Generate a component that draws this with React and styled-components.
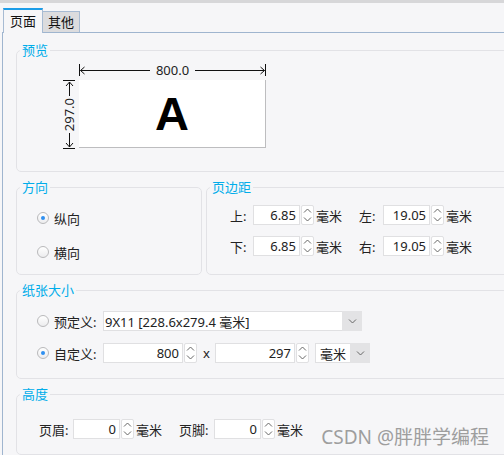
import React from 'react'
import styled, { createGlobalStyle } from 'styled-components'

const GlobalStyle = createGlobalStyle`
  html, body {
    margin: 0;
    padding: 0;
    background: #f6f6f8;
    overflow: hidden;
  }
  body {
    font-family: "Noto Sans", "Noto Sans CJK SC", sans-serif;
    font-size: 13px;
    color: #222;
  }
`

const ChevronUp = () => (
  <svg width='9' height='5' viewBox='0 0 9 5'>
    <path d='M1 4.5 L4.5 1 L8 4.5' fill='none' stroke='#666' strokeWidth='1' />
  </svg>
)
const ChevronDown = ({ size = 9 }) => (
  <svg width={size} height='5' viewBox='0 0 9 5'>
    <path d='M1 0.5 L4.5 4 L8 0.5' fill='none' stroke='#666' strokeWidth='1' />
  </svg>
)

export default function App() {
  return (
    <Window>
      <GlobalStyle />
      <TabBar>
        <Tab active>页面</Tab>
        <Tab>其他</Tab>
      </TabBar>
      <Panel>
        <Group>
          <Legend>预览</Legend>
          <Body pad='6px 0 23px 45px'>
            <Preview>
              <TopDim>
                <Tick />
                <svg width='5' height='9' viewBox='0 0 5 9'>
                  <path d='M4.5 1 L0.5 4.5 L4.5 8 M0.5 4.5 H5' fill='none' stroke='#111' />
                </svg>
                <HLine />
                <DimLabel>800.0</DimLabel>
                <HLine />
                <svg width='5' height='9' viewBox='0 0 5 9'>
                  <path d='M0.5 1 L4.5 4.5 L0.5 8 M0 4.5 H4.5' fill='none' stroke='#111' />
                </svg>
                <Tick />
              </TopDim>
              <SideDim>
                <HTick />
                <svg width='9' height='6' viewBox='0 0 9 6'>
                  <path d='M1 5 L4.5 1 L8 5 M4.5 1 V6' fill='none' stroke='#111' />
                </svg>
                <VLine />
                <SideLabel>297.0</SideLabel>
                <VLine />
                <svg width='9' height='6' viewBox='0 0 9 6'>
                  <path d='M1 1 L4.5 5 L8 1 M4.5 0 V5' fill='none' stroke='#111' />
                </svg>
                <HTick />
              </SideDim>
              <Paper>A</Paper>
            </Preview>
          </Body>
        </Group>

        <Pair>
          <Group width='186px'>
            <Legend>方向</Legend>
            <Body pad='13px 0 12px 20px'>
              <Stack gap='14px'>
                <Choice>
                  <Radio checked />
                  纵向
                </Choice>
                <Choice>
                  <Radio />
                  横向
                </Choice>
              </Stack>
            </Body>
          </Group>
          <Group grow>
            <Legend>页边距</Legend>
            <Body pad='10px 0 12px 23px'>
              <Stack gap='11px'>
                <Row>
                  <Field label='上:' labelWidth={23} value='6.85' />
                  <Field label='左:' labelWidth={24} value='19.05' />
                </Row>
                <Row>
                  <Field label='下:' labelWidth={23} value='6.85' />
                  <Field label='右:' labelWidth={24} value='19.05' />
                </Row>
              </Stack>
            </Body>
          </Group>
        </Pair>

        <Group>
          <Legend>纸张大小</Legend>
          <Body pad='13px 0 15px 20px'>
            <Stack gap='12px'>
              <Row>
                <Radio />
                <ChoiceLabel>预定义:</ChoiceLabel>
                <Select width={259}>
                  <SelectText>9X11 [228.6x279.4 毫米]</SelectText>
                  <SelectButton>
                    <ChevronDown />
                  </SelectButton>
                </Select>
              </Row>
              <Row>
                <Radio checked />
                <ChoiceLabel>自定义:</ChoiceLabel>
                <NumberInput width={80} defaultValue='800' readOnly />
                <Spinner />
                <Times>x</Times>
                <NumberInput width={80} defaultValue='297' readOnly />
                <Spinner />
                <Select width={55} gap>
                  <SelectText pad>毫米</SelectText>
                  <SelectButton>
                    <ChevronDown />
                  </SelectButton>
                </Select>
              </Row>
            </Stack>
          </Body>
        </Group>

        <Group>
          <Legend>高度</Legend>
          <Body pad='17px 0 15px 22px'>
            <Row>
              <Field label='页眉:' labelWidth={34} value='0' />
              <Field label='页脚:' labelWidth={35} value='0' />
            </Row>
          </Body>
        </Group>
      </Panel>
      <Watermark>CSDN @胖胖学编程</Watermark>
    </Window>
  )
}

const Field = ({ label, labelWidth, value }) => (
  <FieldWrap>
    <FieldLabel width={labelWidth}>{label}</FieldLabel>
    <NumberInput width={47} defaultValue={value} readOnly />
    <Spinner />
    <Unit>毫米</Unit>
  </FieldWrap>
)

const Spinner = () => (
  <SpinBox>
    <SpinHalf>
      <ChevronUp />
    </SpinHalf>
    <SpinHalf>
      <ChevronDown />
    </SpinHalf>
  </SpinBox>
)

const Window = styled.div`
  position: relative;
  display: flex;
  flex-direction: column;
  width: 504px;
  height: 455px;
  box-sizing: border-box;
  overflow: hidden;
  background: #f6f6f8;
  border-top: 3px solid #d7d7d9;
`

const TabBar = styled.div`
  position: relative;
  z-index: 1;
  display: flex;
  align-items: flex-start;
  height: 24px;
  margin-top: 5px;
  padding-left: 3px;
`

const Tab = styled.div`
  box-sizing: border-box;
  display: flex;
  align-items: center;
  justify-content: center;
  width: ${({ active }) => (active ? `40px` : `37px`)};
  height: ${({ active }) => (active ? `25px` : `21px`)};
  margin-top: ${({ active }) => (active ? `0` : `3px`)};
  padding-top: ${({ active }) => (active ? `0` : `1px`)};
  border: 1px solid #a7bbd3;
  border-bottom: none;
  border-top: ${({ active }) =>
    active ? `2px solid #1c9de8` : `1px solid #a7bbd3`};
  border-left: ${({ active }) => (active ? `1px solid #a7bbd3` : `none`)};
  background: ${({ active }) => (active ? `#f6f6f8` : `#dcdcde`)};
  font-size: 13px;
  line-height: 1;
  color: #111;
`

const Panel = styled.div`
  flex: 1;
  display: flex;
  flex-direction: column;
  gap: 7px;
  box-sizing: border-box;
  width: 560px;
  margin-left: 2px;
  padding: 9px 0 0 13px;
  border-top: 1px solid #9fb5cf;
  border-left: 1px solid #9fb5cf;
`

const Group = styled.fieldset`
  box-sizing: border-box;
  margin: 0;
  min-width: 0;
  padding: 0;
  width: ${({ width }) => width || `auto`};
  flex: ${({ grow }) => (grow ? `1` : `none`)};
  border: 1px solid #e2e2e6;
  border-radius: 5px;
`

const Legend = styled.legend`
  margin-left: 3px;
  padding: 0 2px;
  font-size: 13px;
  line-height: 16px;
  color: #00adea;
`

const Body = styled.div`
  padding: ${({ pad }) => pad};
`

const Pair = styled.div`
  display: flex;
  gap: 4px;
`

const Preview = styled.div`
  display: grid;
  grid-template-columns: 14px 187px;
  grid-template-rows: 12px 68px;
  column-gap: 3px;
  row-gap: 4px;
`

const TopDim = styled.div`
  grid-column: 2;
  grid-row: 1;
  display: flex;
  align-items: center;
  height: 12px;
`

const Tick = styled.span`
  width: 1px;
  height: 12px;
  background: #111;
`

const HLine = styled.span`
  flex: 1;
  height: 1px;
  background: #111;
`

const DimLabel = styled.span`
  padding: 0 6px;
  font-size: 13px;
  line-height: 12px;
  color: #222;
`

const SideDim = styled.div`
  grid-column: 1;
  grid-row: 2;
  display: flex;
  flex-direction: column;
  align-items: center;
  height: 69px;
`

const HTick = styled.span`
  width: 12px;
  height: 1px;
  background: #111;
`

const VLine = styled.span`
  flex: 1;
  width: 1px;
  background: #111;
`

const SideLabel = styled.span`
  writing-mode: vertical-rl;
  transform: rotate(180deg);
  padding: 2px 0;
  font-size: 13px;
  line-height: 14px;
  color: #222;
`

const Paper = styled.div`
  grid-column: 2;
  grid-row: 2;
  display: flex;
  align-items: center;
  justify-content: center;
  background: #fff;
  border-right: 1px solid #bdbdbf;
  border-bottom: 1px solid #bdbdbf;
  font-family: "Liberation Sans", Arial, sans-serif;
  font-weight: bold;
  font-size: 47px;
  line-height: 1;
  color: #000;
`

const Stack = styled.div`
  display: flex;
  flex-direction: column;
  gap: ${({ gap }) => gap};
`

const Row = styled.div`
  display: flex;
  align-items: center;
  height: 20px;
`

const Choice = styled.label`
  display: flex;
  align-items: center;
  height: 20px;
  font-size: 13px;
  color: #222;
`

const Radio = styled.span`
  box-sizing: border-box;
  display: inline-flex;
  align-items: center;
  justify-content: center;
  flex: none;
  width: 12px;
  height: 12px;
  margin-right: 5px;
  border: 1px solid #b9b9bb;
  border-radius: 50%;
  background: linear-gradient(#fff, #ececee);
  &::after {
    content: '';
    display: ${({ checked }) => (checked ? `block` : `none`)};
    width: 4px;
    height: 4px;
    border-radius: 50%;
    background: #2f8ff0;
  }
`

const ChoiceLabel = styled.span`
  width: 49px;
  font-size: 13px;
`

const FieldWrap = styled.div`
  display: flex;
  align-items: center;
  & + & {
    margin-left: 17px;
  }
`

const FieldLabel = styled.span`
  width: ${({ width }) => width}px;
  font-size: 13px;
  color: #222;
`

const NumberInput = styled.input`
  box-sizing: border-box;
  width: ${({ width }) => width}px;
  height: 20px;
  margin: 0;
  padding: 0 3px;
  border: 1px solid #e0e0e2;
  background: #fff;
  text-align: right;
  font-family: inherit;
  font-size: 13px;
  color: #222;
  outline: none;
`

const SpinBox = styled.div`
  box-sizing: border-box;
  display: flex;
  flex-direction: column;
  width: 13px;
  height: 20px;
  margin-left: 1px;
  border: 1px solid #e0e0e2;
  border-radius: 2px;
  background: #fff;
`

const SpinHalf = styled.div`
  flex: 1;
  display: flex;
  align-items: center;
  justify-content: center;
`

const Unit = styled.span`
  margin-left: 2px;
  font-size: 13px;
  color: #222;
`

const Times = styled.span`
  width: 18px;
  padding-left: 6px;
  box-sizing: border-box;
  font-size: 13px;
`

const Select = styled.div`
  box-sizing: border-box;
  display: flex;
  width: ${({ width }) => width}px;
  height: 20px;
  margin-left: ${({ gap }) => (gap ? `6px` : `0`)};
  border: 1px solid #e0e0e2;
  border-right: none;
  background: #fff;
`

const SelectText = styled.span`
  flex: 1;
  display: flex;
  align-items: center;
  padding-left: ${({ pad }) => (pad ? `4px` : `1px`)};
  font-size: 13px;
  color: #222;
  white-space: nowrap;
  overflow: hidden;
`

const SelectButton = styled.span`
  display: flex;
  align-items: center;
  justify-content: center;
  width: 20px;
  margin: -1px 0;
  background: #e3e3e5;
`

const Watermark = styled.div`
  position: absolute;
  right: 15px;
  bottom: 7px;
  font-size: 19px;
  line-height: 22px;
  color: #9e9e9e;
  pointer-events: none;
`
